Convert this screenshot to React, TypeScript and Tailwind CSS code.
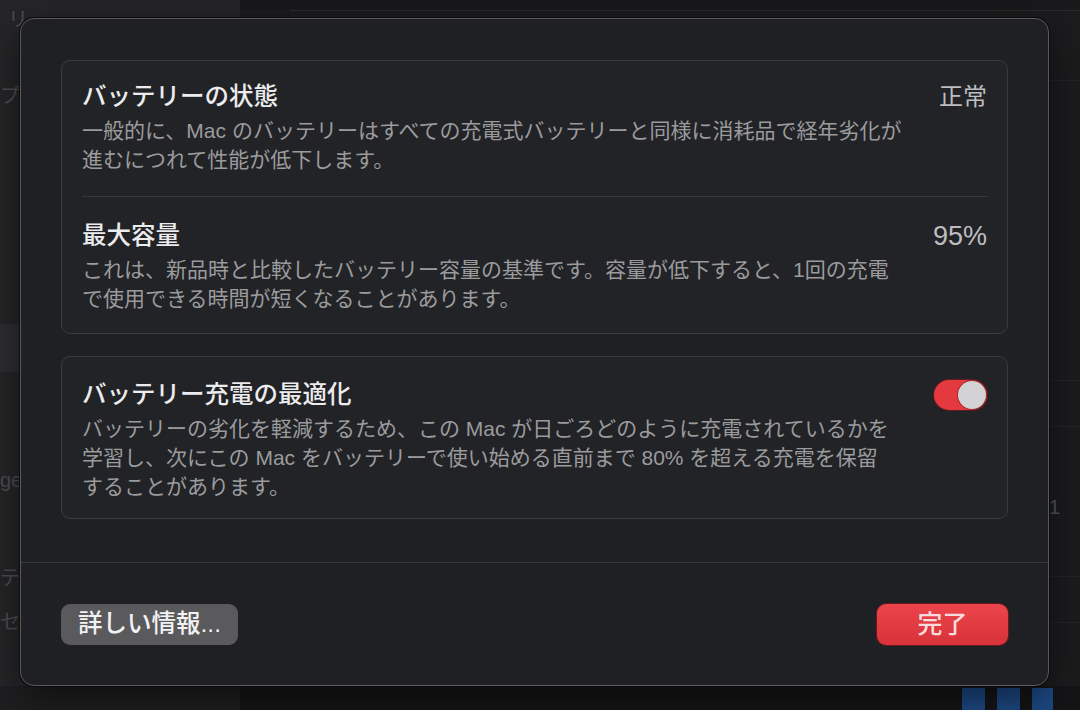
export default function App() {
  return (
    <div className="relative flex h-[710px] w-[1080px] overflow-hidden bg-[#1b1b1d] font-['Liberation_Sans','Noto_Sans_CJK_JP',sans-serif]">
      {/* background app: sidebar */}
      <div className="flex h-full w-[240px] shrink-0 flex-col bg-[#262628] text-[20px] leading-[24px] text-[#4e4e51]">
        <div className="mt-[8px] pl-[8px]">リ</div>
        <div className="mt-[52px] pl-[0px]">プ</div>
        <div className="mt-[216px] h-[48px] bg-[#2f2f31]" />
        <div className="mt-[96px] pl-0">ge</div>
        <div className="mt-[74px] pl-0">テ</div>
        <div className="mt-[20px] pl-0">セ</div>
        <div className="mt-auto h-[24px] bg-[#1f1f21]" />
      </div>
      {/* background app: main */}
      <div className="flex h-full flex-1 flex-col">
        <div className="h-[10px] bg-[#19191b]" />
        <div className="ml-[50px] h-px bg-[#2c2c2e]" />
        <div className="flex flex-1 flex-col bg-[#1c1c1e]">
          <div className="h-[70px] border-b border-[#262628]" />
          <div className="h-[300px] border-b border-[#262628]" />
          <div className="h-[46px] border-b border-[#262628]" />
          <div className="flex h-[110px] items-center justify-end pr-[20px] pt-[50px] text-[20px] text-[#55555a]">1</div>
          <div className="h-[40px] border-b border-[#262628]" />
          <div className="h-[46px] border-b border-[#262628]" />
        </div>
        <div className="flex h-[24px] items-end justify-end gap-[12px] bg-[#151517] pr-[27px]">
          <div className="h-[22px] w-[23px] bg-[#1d4a86]" />
          <div className="h-[22px] w-[23px] bg-[#1d4a86]" />
          <div className="h-[22px] w-[21px] bg-[#1d4a86]" />
        </div>
      </div>

      {/* dialog overlay */}
      <div className="absolute left-[20px] top-[18px] flex h-[668px] w-[1029px] flex-col rounded-[14px] border border-[#5a5a5d] bg-[#1f2023] shadow-[0_0_0_1px_#0c0c0d,0_12px_40px_rgba(0,0,0,0.55)]">
        <div className="flex flex-1 flex-col gap-[22px] px-[40px] pt-[41px]">
          {/* card 1 */}
          <div className="rounded-[9px] border border-[#3a3b3e] bg-[#222326] px-[20px] pb-[20px] pt-[21px]">
            <div className="flex justify-between">
              <div className="flex flex-col">
                <div className="text-[24.5px] font-medium leading-[30px] text-[#ececee]">バッテリーの状態</div>
                <div className="mt-[4px] whitespace-nowrap text-[21px] leading-[29px] text-[#9b9b9e]">
                  一般的に、Mac のバッテリーはすべての充電式バッテリーと同様に消耗品で経年劣化が
                  <br />
                  進むにつれて性能が低下します。
                </div>
              </div>
              <div className="text-[24px] leading-[30px] text-[#bdbdc0]">正常</div>
            </div>
            <div className="mb-[24px] mt-[22px] h-px bg-[#36373a]" />
            <div className="flex justify-between">
              <div className="flex flex-col">
                <div className="text-[24.5px] font-medium leading-[30px] text-[#ececee]">最大容量</div>
                <div className="mt-[4px] whitespace-nowrap text-[21px] leading-[29px] text-[#9b9b9e]">
                  これは、新品時と比較したバッテリー容量の基準です。容量が低下すると、1回の充電
                  <br />
                  で使用できる時間が短くなることがあります。
                </div>
              </div>
              <div className="text-[27px] leading-[30px] text-[#bdbdc0]">95%</div>
            </div>
          </div>

          {/* card 2 */}
          <div className="rounded-[9px] border border-[#3a3b3e] bg-[#222326] px-[20px] pb-[17px] pt-[23px]">
            <div className="flex justify-between">
              <div className="flex flex-col">
                <div className="text-[24.5px] font-medium leading-[30px] text-[#ececee]">バッテリー充電の最適化</div>
                <div className="mt-[4px] whitespace-nowrap text-[21px] leading-[29px] text-[#9b9b9e]">
                  バッテリーの劣化を軽減するため、この Mac が日ごろどのように充電されているかを
                  <br />
                  学習し、次にこの Mac をバッテリーで使い始める直前まで 80% を超える充電を保留
                  <br />
                  することがあります。
                </div>
              </div>
              <div className="flex h-[30px] w-[53px] shrink-0 items-center justify-end rounded-full bg-[#e4393f] pr-[1px] shadow-[0_0_0_1px_#5a1c1f]">
                <div className="h-[28px] w-[28px] rounded-full bg-[#d3d3d5] shadow-[0_0_0_1px_rgba(120,30,35,0.6)]" />
              </div>
            </div>
          </div>
        </div>

        <div className="h-px bg-[#38393c]" />

        <div className="flex h-[122px] items-center justify-between px-[40px]">
          <div className="flex h-[41px] w-[177px] items-center justify-center rounded-[9px] bg-[#5a5a5d] text-[24.5px] font-medium leading-none text-[#f2f2f4]">
            詳しい情報...
          </div>
          <div className="flex h-[41px] w-[131px] items-center justify-center rounded-[9px] bg-gradient-to-b from-[#ec444a] to-[#d8323a] text-[25px] font-medium leading-none text-[#f8dcdd] shadow-[0_0_0_1px_#6a1a1e]">
            完了
          </div>
        </div>
      </div>
    </div>
  );
}
